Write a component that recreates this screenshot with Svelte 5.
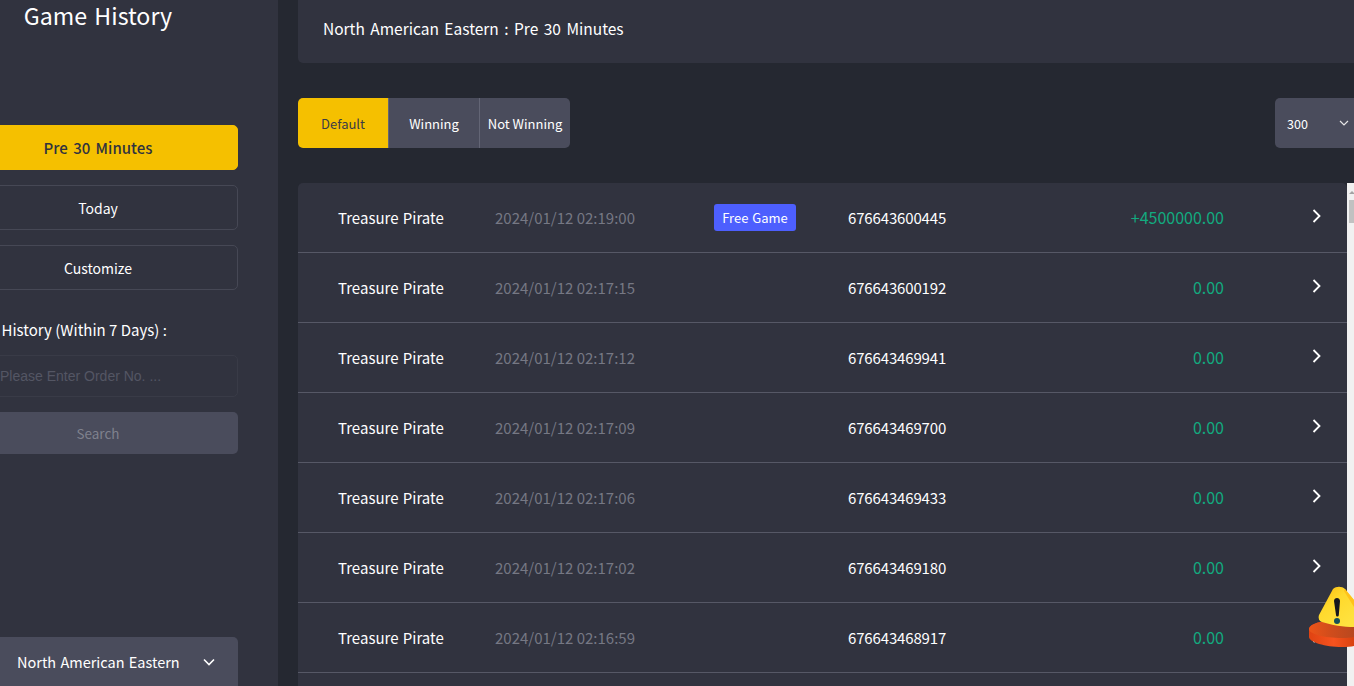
<script lang="ts">
	let rows = [
		{ time: '2024/01/12 02:19:00', order: '676643600445', amount: '+4500000.00', free: true },
		{ time: '2024/01/12 02:17:15', order: '676643600192', amount: '0.00', free: false },
		{ time: '2024/01/12 02:17:12', order: '676643469941', amount: '0.00', free: false },
		{ time: '2024/01/12 02:17:09', order: '676643469700', amount: '0.00', free: false },
		{ time: '2024/01/12 02:17:06', order: '676643469433', amount: '0.00', free: false },
		{ time: '2024/01/12 02:17:02', order: '676643469180', amount: '0.00', free: false },
		{ time: '2024/01/12 02:16:59', order: '676643468917', amount: '0.00', free: false }
	];
</script>

<div class="page">
	<aside class="sidebar">
		<h1 class="title">Game History</h1>
		<button class="side-btn active">Pre 30 Minutes</button>
		<button class="side-btn">Today</button>
		<button class="side-btn">Customize</button>
		<div class="order-label">Order History (Within 7 Days) :</div>
		<input class="order-input" placeholder="Please Enter Order No. ..." />
		<button class="search-btn">Search</button>
		<div class="zone">
			<span>North American Eastern</span>
			<svg width="14" height="14" viewBox="0 0 14 14"><path d="M2 4.500 7 9.500 12 4.500" fill="none" stroke="#fff" stroke-width="1.6" /></svg>
		</div>
	</aside>

	<main class="main">
		<div class="head">North American Eastern : Pre 30 Minutes</div>

		<div class="toolbar">
			<div class="tabs">
				<button class="tab selected">Default</button>
				<button class="tab">Winning</button>
				<button class="tab">Not Winning</button>
			</div>
			<div class="page-size">
				<span>300</span>
				<svg width="10" height="10" viewBox="0 0 10 10"><path d="M1 3 5 7 9 3" fill="none" stroke="#e6e6e6" stroke-width="1.2" /></svg>
			</div>
		</div>

		<div class="list-wrap">
			<div class="list">
				{#each rows as row}
					<div class="row">
						<span class="name">Treasure Pirate</span>
						<span class="time">{row.time}</span>
						<span class="tag-cell">
							{#if row.free}<span class="tag">Free Game</span>{/if}
						</span>
						<span class="order">{row.order}</span>
						<span class="amount">{row.amount}</span>
						<svg class="chev" width="12" height="16" viewBox="0 0 12 16"><path d="M2.500 2 8.500 8 2.500 14" fill="none" stroke="#fff" stroke-width="1.8" /></svg>
					</div>
				{/each}
			</div>
			<div class="scrollbar">
				<svg class="arrow" width="5" height="17" viewBox="0 0 5 17"><path d="M0 11 3 8 5 10 5 11z" fill="#a3a3a3" /></svg>
				<div class="thumb"></div>
			</div>
		</div>
	</main>

	<svg class="alert" width="46" height="62" viewBox="0 0 46 62">
		<defs>
			<linearGradient id="side" x1="0" x2="1" y1="0" y2="0">
				<stop offset="0" stop-color="#df4312" />
				<stop offset="0.55" stop-color="#f6531f" />
				<stop offset="1" stop-color="#d8420f" />
			</linearGradient>
			<linearGradient id="face" x1="0" x2="1" y1="0" y2="0">
				<stop offset="0" stop-color="#ec5418" />
				<stop offset="0.5" stop-color="#cf4c1c" />
				<stop offset="1" stop-color="#b8481f" />
			</linearGradient>
			<linearGradient id="tri" x1="0" x2="0.7" y1="0" y2="1">
				<stop offset="0" stop-color="#f9b90f" />
				<stop offset="0.45" stop-color="#ffd92c" />
				<stop offset="1" stop-color="#ffe23f" />
			</linearGradient>
		</defs>
		<path d="M1 43v8c0 5 16 10 33 10 5 0 9-.4 12-1V34H36C17 34 1 37 1 43z" fill="url(#side)" />
		<path d="M1 43c0-5 16-10 35-10h10v18c-3 .6-8 1-12 1C16 52 1 48 1 43z" fill="url(#face)" />
		<path d="M25 3c3-3 9-3 12 0l9 11v27c-10 0-23-2-32-5-3-1-4-4-3-7z" fill="url(#tri)" />
		<path d="M37 3l9 11v7L36 5z" fill="#ffc21a" />
		<path d="M26 15c0-4 6-4 6 0l-1.200 14c-.2 2-2.600 2-2.800 0z" fill="#16161e" />
		<circle cx="29" cy="35" r="3" fill="#15505a" />
	</svg>
</div>

<style>
	:global(body) {
		background: #252831;
		overflow: hidden;
	}

	button {
		font-family: inherit;
		cursor: pointer;
	}

	.page {
		display: flex;
		height: 686px;
		overflow: hidden;
		position: relative;
		font-family: 'Noto Sans CJK KR', 'Noto Sans', sans-serif;
		color: #fff;
		background: #252831;
	}

	.sidebar {
		flex: none;
		width: 360px;
		height: 686px;
		margin-left: -82px;
		padding: 0 40px;
		box-sizing: border-box;
		background: #31333f;
		display: flex;
		flex-direction: column;
		align-items: center;
	}

	.title {
		margin: 0;
		height: 125px;
		font-size: 23.200px;
		font-weight: 400;
		line-height: 30px;
		word-spacing: 2px;
		white-space: nowrap;
		flex: none;
	}

	.side-btn {
		width: 280px;
		height: 45px;
		margin-bottom: 15px;
		background: transparent;
		border: 1px solid #464855;
		border-radius: 5px;
		color: #fff;
		font-size: 14px;
		flex: none;
	}

	.side-btn.active {
		background: #f5c000;
		border-color: #f5c000;
		color: #31333f;
		font-size: 15px;
		font-weight: 500;
		word-spacing: 2px;
	}

	.order-label {
		align-self: flex-start;
		height: 50px;
		line-height: 50px;
		font-size: 15px;
		white-space: nowrap;
		flex: none;
	}

	.order-input {
		width: 280px;
		height: 42px;
		box-sizing: border-box;
		flex: none;
		padding: 0 0 0 41px;
		background: transparent;
		border: 1px solid #393b47;
		border-radius: 5px;
		font-family: 'Liberation Sans', Arial, sans-serif;
		font-size: 14px;
		outline: none;
	}

	.order-input::placeholder {
		color: #545664;
		opacity: 1;
	}

	.search-btn {
		width: 280px;
		height: 42px;
		flex: none;
		margin-top: 15px;
		background: #4a4c5c;
		border: none;
		border-radius: 5px;
		color: #7f818e;
		font-size: 13.500px;
	}

	.zone {
		width: 280px;
		height: 49px;
		margin-top: auto;
		flex: none;
		box-sizing: border-box;
		padding: 0 22px 0 59px;
		background: #4a4c5c;
		border-radius: 5px 5px 0 0;
		display: flex;
		align-items: center;
		justify-content: space-between;
		font-size: 14.500px;
		word-spacing: 1px;
		white-space: nowrap;
	}

	.main {
		flex: none;
		width: 1100px;
		padding-left: 20px;
		box-sizing: border-box;
	}

	.head {
		height: 63px;
		padding-left: 25px;
		box-sizing: border-box;
		background: #31333f;
		border-radius: 0 0 0 5px;
		font-size: 15.500px;
		word-spacing: 2px;
		line-height: 57px;
		white-space: nowrap;
	}

	.toolbar {
		display: flex;
		justify-content: space-between;
		align-items: flex-start;
		margin-top: 35px;
		height: 50px;
	}

	.tabs {
		display: flex;
		height: 50px;
		border-radius: 5px;
		overflow: hidden;
	}

	.tab {
		height: 50px;
		width: 91px;
		padding: 0;
		background: #4a4c5c;
		border: none;
		border-left: 1px solid #636575;
		color: #fff;
		font-size: 13px;
		white-space: nowrap;
	}

	.tab.selected {
		width: 90px;
		background: #f5c000;
		border-left: none;
		color: #3a3c48;
	}

	.page-size {
		width: 92px;
		height: 50px;
		margin-right: 11px;
		box-sizing: border-box;
		padding-left: 12px;
		background: #4a4c5c;
		border-radius: 5px 0 0 5px;
		display: flex;
		align-items: center;
		font-size: 12.500px;
	}

	.page-size svg {
		margin-left: 31px;
	}

	.list-wrap {
		display: flex;
		margin-top: 35px;
		height: 503px;
	}

	.list {
		width: 1049px;
		flex: none;
		height: 503px;
		overflow: hidden;
		background: #31333f;
		border-radius: 5px 5px 0 0;
	}

	.row {
		height: 70px;
		box-sizing: border-box;
		border-bottom: 1px solid #565866;
		padding-left: 40px;
		display: grid;
		grid-template-columns: 157px 219px 134px 120px 256px 93px;
		align-items: center;
		font-size: 15px;
		word-spacing: 1px;
		white-space: nowrap;
	}

	.time {
		color: #767884;
		word-spacing: 0;
	}

	.tag {
		display: inline-block;
		width: 82px;
		height: 27px;
		line-height: 27px;
		text-align: center;
		background: #4d5ffe;
		border-radius: 3px;
		font-size: 13px;
		color: #fff;
	}

	.order {
		letter-spacing: -0.15px;
	}

	.amount {
		grid-column: 5;
		text-align: right;
		color: #12ab7f;
		font-size: 16px;
		line-height: 22px;
		margin-top: -2px;
	}

	.chev {
		margin-left: 87px;
		margin-top: -4px;
	}

	.scrollbar {
		width: 7px;
		flex: none;
		background: #f1f1f1;
		height: 503px;
		display: flex;
		flex-direction: column;
		align-items: flex-end;
	}

	.arrow {
		display: block;
		flex: none;
	}

	.thumb {
		width: 5px;
		height: 23px;
		background: #c1c1c1;
	}

	.alert {
		position: absolute;
		left: 1308px;
		top: 586px;
	}
</style>
